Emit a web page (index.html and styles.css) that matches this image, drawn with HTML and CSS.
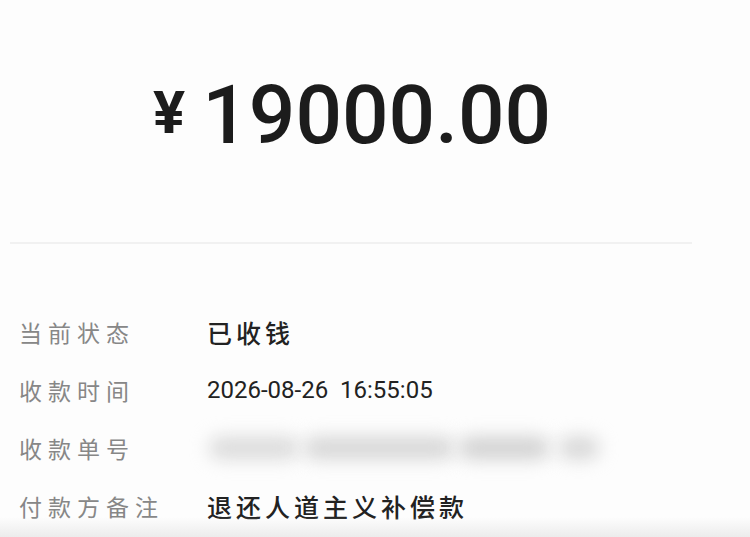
FILE: index.html
```html
<!DOCTYPE html>
<html lang="zh">
<head>
<meta charset="utf-8">
<link rel="stylesheet" href="styles.css">
</head>
<body>
<div class="page">
  <div class="amount">
    <span class="yen">¥</span><span class="num">19000.00</span>
  </div>
  <div class="divider"></div>
  <div class="details">
    <div class="row">
      <div class="label">当前状态</div>
      <div class="value">已收钱</div>
    </div>
    <div class="row">
      <div class="label">收款时间</div>
      <div class="value date">2026-08-26&nbsp;&nbsp;16:55:05</div>
    </div>
    <div class="row">
      <div class="label">收款单号</div>
      <div class="value blurred">
        <span class="blob b1"></span><span class="blob b2"></span><span class="blob b3"></span><span class="blob b4"></span>
      </div>
    </div>
    <div class="row">
      <div class="label">付款方备注</div>
      <div class="value">退还人道主义补偿款</div>
    </div>
  </div>
  <div class="bottom-shade"></div>
</div>
</body>
</html>
```

FILE: styles.css
```css
html, body {
  margin: 0;
  padding: 0;
  background: #fdfdfd;
}
.page {
  width: 750px;
  height: 537px;
  overflow: hidden;
  position: relative;
  font-family: "Noto Sans CJK SC", "Noto Sans", sans-serif;
  color: #222;
}
.amount {
  display: flex;
  align-items: flex-start;
  justify-content: flex-start;
  padding-left: 153px;
  padding-top: 74px;
  height: 166px;
  box-sizing: border-box;
  font-family: Roboto, "Noto Sans", sans-serif;
  color: #1c1c1c;
}
.yen {
  font-size: 60px;
  font-weight: 700;
  line-height: 1;
  margin-top: 9px;
  margin-right: 17px;
}
.num {
  font-size: 82px;
  font-weight: 500;
  line-height: 1;
}
.divider {
  margin: 76px 58px 0 10px;
  height: 2px;
  background: #f1f1f1;
}
.details {
  padding-top: 59px;
  padding-left: 19px;
}
.row {
  display: flex;
  align-items: center;
  height: 58px;
}
.label {
  width: 188px;
  font-size: 23px;
  letter-spacing: 6px;
  color: #878787;
}
.value {
  font-size: 25px;
  letter-spacing: 4px;
  font-weight: 500;
  color: #222;
}
.value.date {
  font-family: Roboto, "Noto Sans", sans-serif;
  letter-spacing: 0;
  font-size: 24px;
  font-weight: 400;
}
.blurred {
  position: relative;
  width: 395px;
  height: 36px;
  margin-left: 2px;
}
.blob {
  position: absolute;
  top: 7px;
  height: 22px;
  border-radius: 11px;
  background: #cfcfcf;
  filter: blur(9px);
}
.b1 { left: 0; width: 90px; background: #dadada; }
.b2 { left: 95px; width: 150px; background: #d5d5d5; }
.b3 { left: 250px; width: 90px; background: #d0d0d0; }
.b4 { left: 350px; width: 40px; background: #d6d6d6; }
.bottom-shade {
  position: absolute;
  left: 0;
  right: 0;
  bottom: 0;
  height: 20px;
  background: linear-gradient(to bottom, rgba(238,238,238,0), #ececec);
}
```
